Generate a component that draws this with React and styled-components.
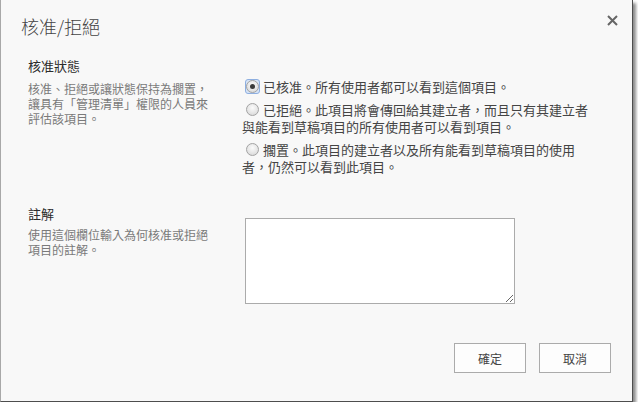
import React from 'react';
import styled, { createGlobalStyle, css } from 'styled-components';

const GlobalStyle = createGlobalStyle`
  html, body {
    margin: 0;
    padding: 0;
    background: #ffffff;
  }
  body {
    font-family: "Noto Sans CJK TC", "Noto Sans", sans-serif;
  }
`;

const Dialog = styled.div`
  box-sizing: border-box;
  width: 633px;
  height: 402px;
  background: #f8f8f8;
  border-left: 1px solid #a8a8a8;
  border-right: 1px solid #4d4d4d;
  border-bottom: 1px solid #4d4d4d;
  box-shadow: 3px 3px 3px rgba(0, 0, 0, 0.45);
  display: flex;
  flex-direction: column;
`;

const Header = styled.div`
  display: flex;
  justify-content: space-between;
  align-items: flex-start;
  padding: 14px 14px 0 20px;
`;

const Title = styled.h1`
  margin: 0;
  font-size: 18px;
  line-height: 24px;
  font-weight: 300;
  color: #444;
`;

const CloseButton = styled.button`
  border: 0;
  background: none;
  padding: 0;
  margin-top: 1px;
  width: 11px;
  height: 11px;
  display: flex;
  cursor: pointer;
`;

const Body = styled.div`
  padding: 19px 0 0 27px;
`;

const Section = styled.section`
  display: grid;
  grid-template-columns: 214px 353px;
  margin-bottom: ${p => p.$spacing}px;
`;

const Intro = styled.div`
  display: flex;
  flex-direction: column;
`;

const SectionTitle = styled.h2`
  margin: 0;
  font-size: 13px;
  line-height: 17px;
  font-weight: 400;
  color: #2b2b2b;
`;

const Description = styled.p`
  margin: ${p => p.$top}px 0 0;
  width: 185px;
  font-size: 12px;
  line-height: 15px;
  color: #7a7a7a;
`;

const Field = styled.div`
  padding-top: ${p => p.$top}px;
`;

const Option = styled.label`
  display: block;
  font-size: 13px;
  line-height: 17px;
  color: #444;
  cursor: pointer;

  & + & {
    margin-top: 6px;
  }
`;

const RadioBox = styled.span`
  display: inline-block;
  box-sizing: border-box;
  width: 15px;
  height: 15px;
  margin: 0 3px;
  vertical-align: -2px;
  border: 1px solid transparent;
  border-radius: 3px;

  ${p => p.$focused && css`
    border-color: #8eafe0;
    background: #d7e5f8;
  `}
`;

const Radio = styled.span`
  display: block;
  box-sizing: border-box;
  width: 13px;
  height: 13px;
  border-radius: 50%;
  border: 1px solid #a3a3a3;
  background: radial-gradient(circle at 50% 35%, #fbfbfb 0%, #e4e4e4 60%, #d2d2d2 100%);
  position: relative;

  ${p => p.$checked && css`
    &::after {
      content: '';
      position: absolute;
      left: 3px;
      top: 3px;
      width: 5px;
      height: 5px;
      border-radius: 50%;
      background: #3a3a3a;
    }
  `}
`;

const Notes = styled.textarea`
  display: block;
  box-sizing: border-box;
  width: 270px;
  height: 86px;
  margin: 0 0 0 3px;
  padding: 4px;
  border: 1px solid #ababab;
  background: #ffffff;
  font-family: inherit;
  font-size: 13px;
  color: #444;
  outline: none;
`;

const Footer = styled.div`
  display: flex;
  justify-content: flex-end;
  gap: 13px;
  padding-right: 21px;
`;

const Button = styled.button`
  box-sizing: border-box;
  width: 72px;
  height: 30px;
  padding: 0;
  border: 1px solid #ababab;
  background: #fdfdfd;
  font-family: inherit;
  font-size: 12px;
  color: #444;
  cursor: pointer;
`;

const options = [
  { id: 'approved', text: '已核准。所有使用者都可以看到這個項目。' },
  { id: 'rejected', text: '已拒絕。此項目將會傳回給其建立者，而且只有其建立者與能看到草稿項目的所有使用者可以看到項目。' },
  { id: 'pending', text: '擱置。此項目的建立者以及所有能看到草稿項目的使用者，仍然可以看到此項目。' },
];

export default function App() {
  const selected = 'approved';

  return (
    <>
      <GlobalStyle />
      <Dialog>
        <Header>
          <Title>核准/拒絕</Title>
          <CloseButton aria-label="關閉">
            <svg width="11" height="11" viewBox="0 0 11 11">
              <path d="M1 1 L10 10 M10 1 L1 10" stroke="#666" strokeWidth="2" />
            </svg>
          </CloseButton>
        </Header>

        <Body>
          <Section $spacing={30}>
            <Intro>
              <SectionTitle>核准狀態</SectionTitle>
              <Description $top={7}>
                核准、拒絕或讓狀態保持為擱置，讓具有「管理清單」權限的人員來評估該項目。
              </Description>
            </Intro>
            <Field $top={21}>
              {options.map(option => (
                <Option key={option.id}>
                  <RadioBox $focused={option.id === selected}>
                    <Radio $checked={option.id === selected} />
                  </RadioBox>
                  {option.text}
                </Option>
              ))}
            </Field>
          </Section>

          <Section $spacing={39}>
            <Intro>
              <SectionTitle>註解</SectionTitle>
              <Description $top={5}>
                使用這個欄位輸入為何核准或拒絕項目的註解。
              </Description>
            </Intro>
            <Field $top={13}>
              <Notes />
            </Field>
          </Section>
        </Body>

        <Footer>
          <Button>確定</Button>
          <Button>取消</Button>
        </Footer>
      </Dialog>
    </>
  );
}
